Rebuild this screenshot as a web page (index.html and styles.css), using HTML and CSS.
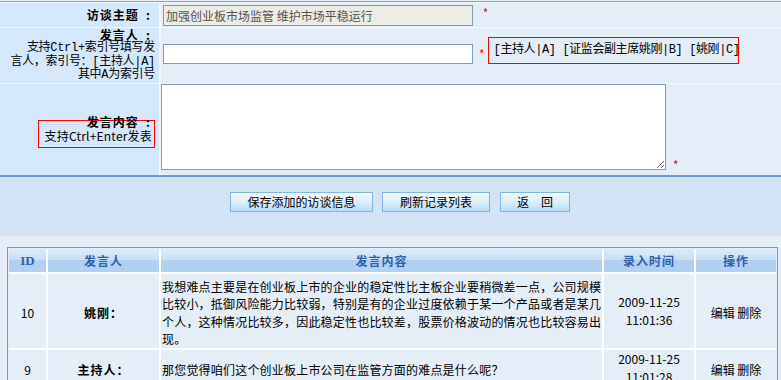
FILE: index.html
```html
<!DOCTYPE html>
<html>
	<head>
		<title>访谈信息</title>
		<meta charset="utf-8" />
		<link rel="stylesheet" href="styles.css">
	</head>
	<body>
		<div class="form-wrap">
			<table class="form-table">
				<tr class="row-topic">
					<td class="label"><b>访谈主题 &nbsp;:</b></td>
					<td class="value">
						<input type="text" class="topic" value="加强创业板市场监管 维护市场平稳运行" disabled />
						<span class="req">*</span>
					</td>
				</tr>
				<tr class="row-speaker">
					<td class="label">
						<b>发言人 &nbsp;:</b>
						<span class="tip">支持Ctrl+索引号填写发<br />言人，索引号：[主持人|A]<br />其中A为索引号</span>
					</td>
					<td class="value">
						<div class="speaker-line">
							<input type="text" class="speaker" />
							<span class="req">*</span>
							<span class="hint-box">[主持人|A] [证监会副主席姚刚|B] [姚刚|C]</span>
						</div>
					</td>
				</tr>
				<tr class="row-content">
					<td class="label">
						<b>发言内容 &nbsp;:</b>
						<span class="hint-small">支持Ctrl+Enter发表</span>
					</td>
					<td class="value top">
						<textarea class="content"></textarea><span class="req">*</span>
					</td>
				</tr>
			</table>
		</div>

		<div class="actions">
			<button type="button" class="btn wide">保存添加的访谈信息</button>
			<button type="button" class="btn">刷新记录列表</button>
			<button type="button" class="btn short">返　回</button>
		</div>

		<div class="list-wrap">
			<table class="list">
				<tr>
					<th class="c-id">ID</th>
					<th class="c-who">发言人</th>
					<th class="c-text">发言内容</th>
					<th class="c-time">录入时间</th>
					<th class="c-ops">操作</th>
				</tr>
				<tr>
					<td class="c-id">10</td>
					<td class="c-who"><b>姚刚：</b></td>
					<td class="c-text">我想难点主要是在创业板上市的企业的稳定性比主板企业要稍微差一点，公司规模比较小，抵御风险能力比较弱，特别是有的企业过度依赖于某一个产品或者是某几个人，这种情况比较多，因此稳定性也比较差，股票价格波动的情况也比较容易出现。</td>
					<td class="c-time">2009-11-25<br />11:01:36</td>
					<td class="c-ops">编辑 删除</td>
				</tr>
				<tr>
					<td class="c-id">9</td>
					<td class="c-who"><b>主持人：</b></td>
					<td class="c-text">那您觉得咱们这个创业板上市公司在监管方面的难点是什么呢？</td>
					<td class="c-time">2009-11-25<br />11:01:28</td>
					<td class="c-ops">编辑 删除</td>
				</tr>
			</table>
		</div>
	</body>
</html>
```

FILE: styles.css
```css
body {
	margin: 0;
	background-color: #e5edf7;
	font-family: "Noto Sans CJK SC", "Liberation Sans", sans-serif;
	font-size: 12px;
	color: #000;
}
.form-wrap {
	margin-top: 1px;
	border-top: 1px solid #7ea4d2;
	padding-top: 1px;
	border-bottom: 2px solid #6c9bd2;
	background-color: #f2f6fb;
}
.form-table {
	width: 100%;
	border-collapse: separate;
	border-spacing: 0;
}
.form-table td {
	padding: 0;
	border-bottom: 1px solid #f2f6fb;
}
.form-table tr:last-child td {
	border-bottom: none;
}
.label {
	width: 155px;
	padding-right: 4px !important;
	background-color: #d5e7fa;
	border-right: 2px solid #f2f6fb;
	text-align: right;
	font-size: 12px;
}
.label b {
	display: block;
	padding-right: 4px;
	font-size: 12px;
	letter-spacing: 1px;
	line-height: 14px;
}
.tip {
	display: block;
	line-height: 13.5px;
	font-family: "Liberation Mono", "Noto Sans CJK SC", monospace;
	letter-spacing: -0.3px;
}
.value {
	background-color: #e4ecf6;
	padding-left: 2px !important;
}
.value.top {
	vertical-align: top;
}
.row-topic td {
	height: 24px;
}
.row-speaker td {
	height: 55px;
}
.row-content td {
	height: 91px;
}
input {
	box-sizing: border-box;
	width: 310px;
	margin: 0;
	border: 1px solid #7f9db9;
	font-family: inherit;
	font-size: 12px;
	vertical-align: middle;
}
input.topic {
	height: 21px;
	padding: 0 2px;
	background-color: #ecebe4;
	color: #555;
}
input.speaker {
	height: 20px;
	background-color: #fff;
}
.req {
	color: #f00;
	margin-left: 7px;
	font-size: 12px;
}
.speaker-line {
	display: flex;
	align-items: flex-end;
	padding-bottom: 10px;
}
.speaker-line .req {
	margin: 0 0 3px 6px;
	line-height: 14px;
}
.hint-box {
	box-sizing: border-box;
	width: 251px;
	height: 27px;
	margin-left: 3px;
	padding: 6px 0 0 5px;
	border: 1px solid #ff0000;
	line-height: 13px;
	white-space: nowrap;
	font-family: "Liberation Mono", "Noto Sans CJK SC", monospace;
	letter-spacing: -0.4px;
}
.row-content .label b {
	margin-top: 4px;
}
.hint-small {
	display: block;
	box-sizing: border-box;
	width: 117px;
	margin: -9px 0 0 auto;
	padding: 8px 2px 5px 0;
	border: 1px solid #ff0000;
	line-height: 13px;
	letter-spacing: 0.2px;
	white-space: nowrap;
}
textarea.content {
	box-sizing: border-box;
	width: 505px;
	height: 86px;
	margin: 0 0 0 -2px;
	border: 1px solid #7f9db9;
	background-color: #fff;
	resize: both;
}
.actions {
	height: 44px;
	padding: 15px 0 0 19px;
	background-color: #d3e3f5;
	text-align: center;
	font-size: 0;
}
.btn {
	height: 20px;
	margin: 0;
	padding: 0;
	border: 1px solid #80b5e4;
	background: linear-gradient(#f3f9fe, #dbeefb 50%, #b9dbf4);
	font-family: inherit;
	font-size: 12px;
	line-height: 18px;
	color: #000;
	width: 108px;
	margin-left: 9px;
}
.btn.wide {
	width: 143px;
	margin-left: 0;
}
.btn.short {
	width: 70px;
	margin-left: 10px;
}
.list-wrap {
	padding: 11px 3px 0 7px;
}
.list {
	width: 771px;
	border: 1px solid #6c9bd2;
	border-bottom: none;
	padding: 1px 1px 0 1px;
	border-collapse: separate;
	border-spacing: 0;
	font-size: 12px;
	table-layout: fixed;
}
.list th {
	height: 23px;
	padding: 0;
	border-right: 2px solid #fff;
	border-bottom: 2px solid #fff;
	background: linear-gradient(#dbeafa, #c6def6 50%, #b0d0f1 50%, #b0d0f1);
	color: #2f62ad;
	font-size: 12px;
	font-weight: bold;
	letter-spacing: 1px;
	text-align: center;
}
.list td {
	padding: 4px 0 0;
	border-right: 2px solid #fff;
	border-bottom: 2px solid #fff;
	background-color: #e5edf7;
	text-align: center;
	line-height: 17.4px;
}
.list td b {
	letter-spacing: 1px;
}
.list th:last-child,
.list td:last-child {
	border-right: none;
}
.list .c-id {
	width: 37px;
}
.list th.c-id {
	font-family: "Liberation Serif", serif;
	font-size: 13px;
	letter-spacing: 0;
}
.list .c-who {
	width: 111px;
}
.list .c-text {
	width: 441px;
}
.list td.c-text {
	text-align: left;
	padding-left: 1px;
	letter-spacing: 0.2px;
}
.list .c-time {
	width: 90px;
}
.list td.c-time {
	line-height: 18px;
	padding-top: 0;
}
```
